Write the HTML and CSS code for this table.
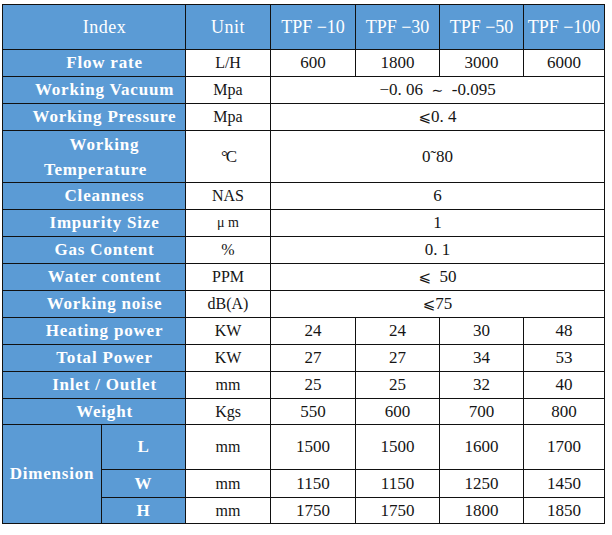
FILE: index.html
```html
<!DOCTYPE html>
<html>
<head>
<meta charset="utf-8">
<link rel="stylesheet" href="styles.css">
</head>
<body>
<table class="spec">
  <colgroup>
    <col class="c-a"><col class="c-b"><col class="c-unit"><col class="c-m1"><col class="c-m2"><col class="c-m3"><col class="c-m4">
  </colgroup>
  <tr class="r-head">
    <th class="hd pad" colspan="2">Index</th>
    <th class="hd">Unit</th>
    <th class="model">TPF −10</th>
    <th class="model">TPF −30</th>
    <th class="model">TPF −50</th>
    <th class="model">TPF −100</th>
  </tr>
  <tr class="r">
    <th class="lbl pad" colspan="2">Flow rate</th>
    <td class="unit">L/H</td>
    <td>600</td><td>1800</td><td>3000</td><td>6000</td>
  </tr>
  <tr class="r">
    <th class="lbl pad" colspan="2">Working Vacuum</th>
    <td class="unit">Mpa</td>
    <td colspan="4">−0. 06 &nbsp;<span class="wave">∼</span> &nbsp;-0.095</td>
  </tr>
  <tr class="r">
    <th class="lbl pad" colspan="2">Working Pressure</th>
    <td class="unit">Mpa</td>
    <td colspan="4"><span class="le">⩽</span>0. 4</td>
  </tr>
  <tr class="r-temp">
    <th class="lbl two pad" colspan="2">Working<br><span class="shift">Temperature</span></th>
    <td class="unit"><span class="deg">°C</span></td>
    <td colspan="4">0˜80</td>
  </tr>
  <tr class="r">
    <th class="lbl pad" colspan="2">Cleanness</th>
    <td class="unit">NAS</td>
    <td colspan="4">6</td>
  </tr>
  <tr class="r">
    <th class="lbl pad" colspan="2">Impurity Size</th>
    <td class="unit small">μ m</td>
    <td colspan="4">1</td>
  </tr>
  <tr class="r">
    <th class="lbl pad" colspan="2">Gas Content</th>
    <td class="unit">%</td>
    <td colspan="4">0. 1</td>
  </tr>
  <tr class="r">
    <th class="lbl pad" colspan="2">Water content</th>
    <td class="unit">PPM</td>
    <td colspan="4"><span class="le">⩽</span>&nbsp; 50</td>
  </tr>
  <tr class="r">
    <th class="lbl pad" colspan="2">Working noise</th>
    <td class="unit">dB(A)</td>
    <td colspan="4"><span class="le">⩽</span>75</td>
  </tr>
  <tr class="r">
    <th class="lbl pad" colspan="2">Heating power</th>
    <td class="unit">KW</td>
    <td>24</td><td>24</td><td>30</td><td>48</td>
  </tr>
  <tr class="r">
    <th class="lbl pad" colspan="2">Total Power</th>
    <td class="unit">KW</td>
    <td>27</td><td>27</td><td>34</td><td>53</td>
  </tr>
  <tr class="r">
    <th class="lbl pad" colspan="2">Inlet / Outlet</th>
    <td class="unit">mm</td>
    <td>25</td><td>25</td><td>32</td><td>40</td>
  </tr>
  <tr class="r-w">
    <th class="lbl pad" colspan="2">Weight</th>
    <td class="unit">Kgs</td>
    <td>550</td><td>600</td><td>700</td><td>800</td>
  </tr>
  <tr class="r-l">
    <th class="lbl" rowspan="3">Dimension</th>
    <th class="lbl">L</th>
    <td class="unit">mm</td>
    <td>1500</td><td>1500</td><td>1600</td><td>1700</td>
  </tr>
  <tr class="r-wd">
    <th class="lbl">W</th>
    <td class="unit">mm</td>
    <td>1150</td><td>1150</td><td>1250</td><td>1450</td>
  </tr>
  <tr class="r-h">
    <th class="lbl">H</th>
    <td class="unit">mm</td>
    <td>1750</td><td>1750</td><td>1800</td><td>1850</td>
  </tr>
</table>
</body>
</html>
```

FILE: styles.css
```css
html, body {
  margin: 0;
  background: #ffffff;
}
body {
  padding: 4px 0 0 2px;
}
.spec {
  border-collapse: collapse;
  table-layout: fixed;
  width: 602px;
  font-family: "Liberation Serif", "Noto Sans CJK SC", serif;
  font-size: 17px;
  color: #151515;
}
.c-a { width: 99px; }
.c-b { width: 84px; }
.c-unit { width: 85px; }
.c-m1 { width: 85px; }
.c-m2 { width: 84px; }
.c-m3 { width: 84px; }
.c-m4 { width: 81px; }
.spec th, .spec td {
  border: 1px solid #111;
  padding: 0;
  text-align: center;
  vertical-align: middle;
  line-height: 20px;
  overflow: hidden;
  white-space: nowrap;
}
.spec th {
  background: #5b9bd5;
  color: #ffffff;
}
.spec .lbl {
  font-family: "Liberation Serif", serif;
  font-weight: bold;
  font-size: 17px;
  letter-spacing: 0.8px;
}
.spec .pad {
  padding-left: 21px;
}
.spec .hd {
  font-family: "Liberation Serif", serif;
  font-weight: normal;
  font-size: 18px;
  letter-spacing: 0.5px;
}
.spec .model {
  font-family: "Liberation Serif", serif;
  font-weight: normal;
  font-size: 18px;
}
.spec .two {
  line-height: 25px;
}
.shift {
  position: relative;
  left: -9px;
}
.spec .unit {
  font-size: 16px;
}
.spec .small {
  font-size: 14px;
}
.deg {
  letter-spacing: -2px;
  font-size: 17px;
}
.le {
  font-family: "DejaVu Sans", sans-serif;
  font-size: 15px;
}
.wave {
  font-family: "DejaVu Sans", sans-serif;
  font-size: 14px;
}
.r-head th { height: 44px; }
.r th, .r td { height: 26px; }
.r-temp th, .r-temp td { height: 51px; }
.r-w th, .r-w td { height: 25px; }
.r-l th, .r-l td { height: 44px; }
.r-wd th, .r-wd td { height: 27px; }
.r-h th, .r-h td { height: 25px; }
```
